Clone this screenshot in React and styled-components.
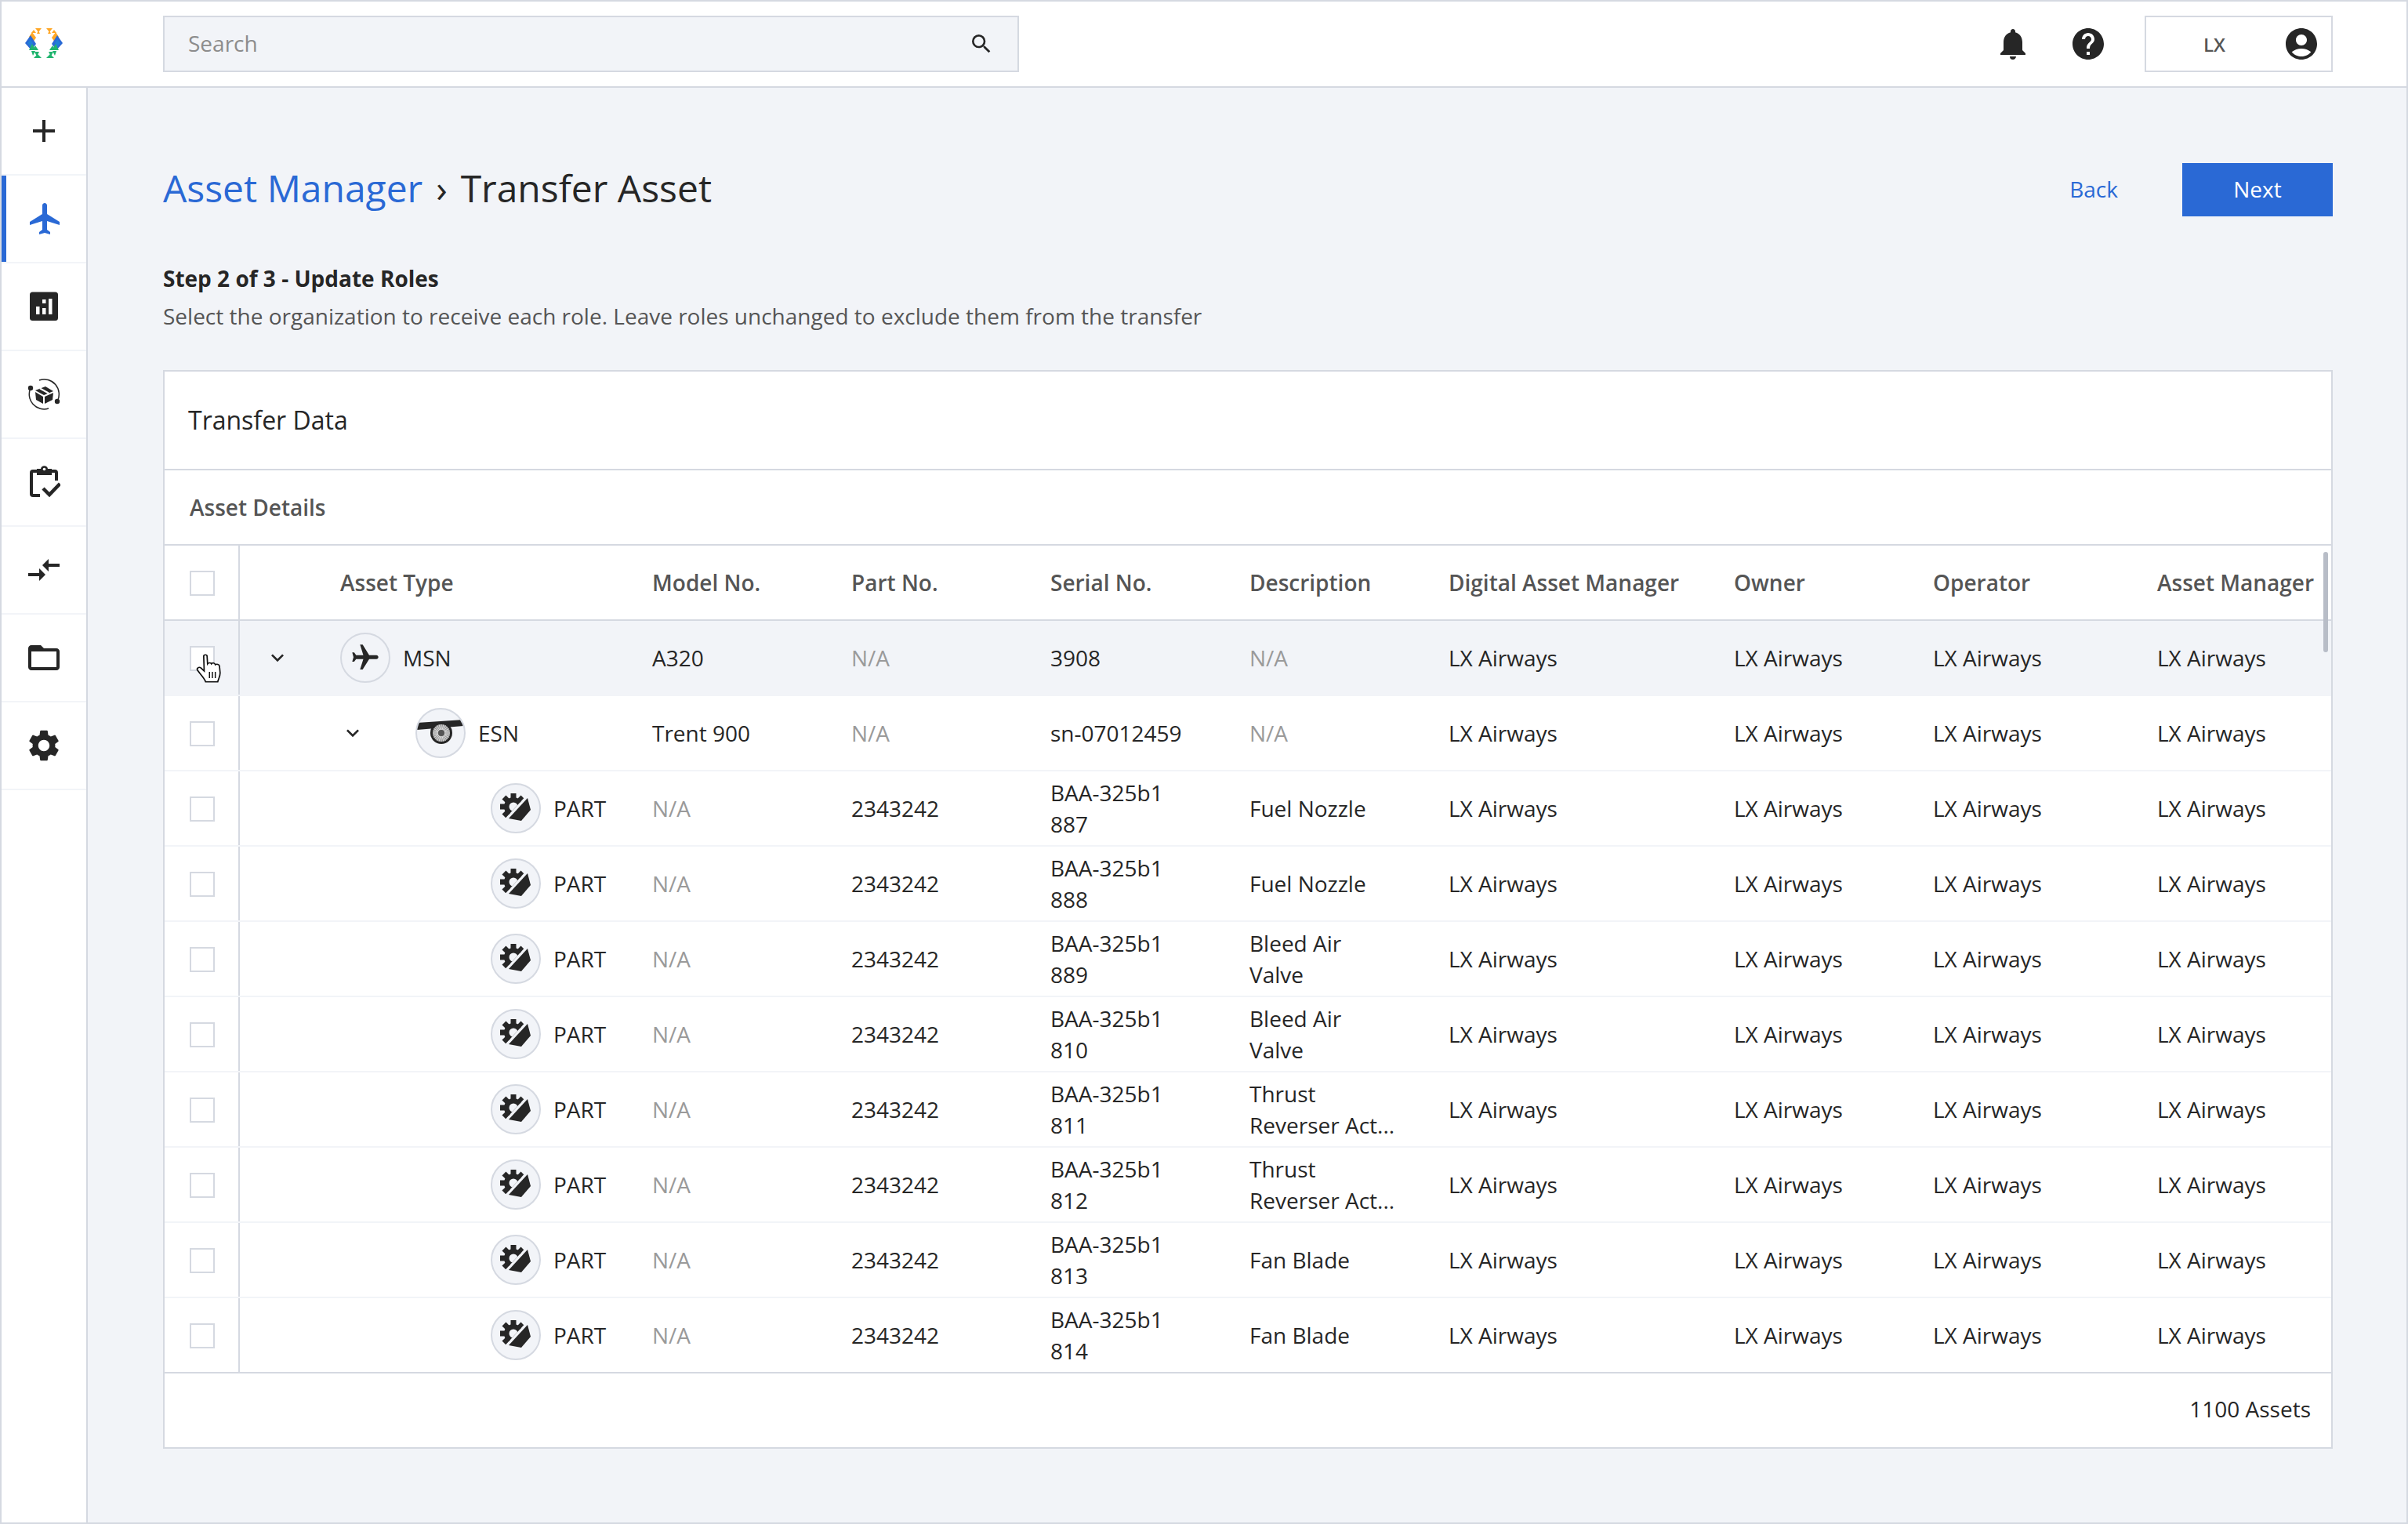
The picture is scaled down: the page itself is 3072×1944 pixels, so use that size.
import React from 'react'
import styled, { createGlobalStyle } from 'styled-components'
import {
  MdAdd,
  MdAccountCircle,
  MdCompareArrows,
  MdFlight,
  MdFolderOpen,
  MdHelp,
  MdKeyboardArrowDown,
  MdNotifications,
  MdSearch,
  MdSettings,
} from 'react-icons/md'

const line = '#d5d9e1'
const soft = '#f2f4f8'
const blue = '#2a69d5'
const ink = '#262626'
const columns = '96px 526px 254px 254px 254px 254px 364px 254px 286px 222px'

const GlobalStyle = createGlobalStyle`
  html, body { margin: 0; padding: 0; }
  body {
    background: ${soft};
    font-family: "Open Sans", "Noto Sans", sans-serif;
    color: ${ink};
  }
`

const Page = styled.div`
  box-sizing: border-box;
  width: 3072px;
  height: 1944px;
  border: 2px solid ${line};
  display: flex;
  flex-direction: column;
  overflow: hidden;
`

const TopBar = styled.header`
  box-sizing: border-box;
  height: 110px;
  flex: none;
  display: flex;
  align-items: center;
  background: #fff;
  border-bottom: 2px solid ${line};
  padding-right: 94px;
`

const LogoCell = styled.div`
  width: 108px;
  display: flex;
  justify-content: center;
  margin-right: 98px;
  margin-top: -2px;
`

const SearchBox = styled.div`
  box-sizing: border-box;
  width: 1092px;
  height: 72px;
  display: flex;
  align-items: center;
  justify-content: space-between;
  background: ${soft};
  border: 2px solid ${line};
  padding: 0 30px;
  color: #8c8c8c;
  font-size: 28px;
  svg { color: ${ink}; }
`

const SearchLabel = styled.span`
  margin-top: -2px;
`

const TopActions = styled.div`
  margin-left: auto;
  display: flex;
  align-items: center;
  gap: 48px;
  svg { display: block; color: ${ink}; }
`

const ProfileBox = styled.div`
  box-sizing: border-box;
  width: 240px;
  height: 72px;
  display: flex;
  align-items: center;
  border: 2px solid ${line};
  padding-right: 14px;
`

const ProfileName = styled.span`
  flex: 1;
  text-align: center;
  font-size: 24px;
  font-weight: 600;
  color: #555;
`

const Body = styled.div`
  flex: 1;
  display: flex;
  min-height: 0;
`

const SideBar = styled.nav`
  box-sizing: border-box;
  width: 110px;
  flex: none;
  background: #fff;
  border-right: 2px solid ${line};
`

const SideItem = styled.div`
  position: relative;
  box-sizing: border-box;
  height: 112px;
  display: flex;
  align-items: center;
  justify-content: center;
  border-bottom: 2px solid ${soft};
  padding-left: ${(p) => (p.$active ? '4px' : '0')};
  color: ${(p) => (p.$active ? blue : ink)};
  svg { display: block; }
  &::before {
    content: '';
    display: ${(p) => (p.$active ? 'block' : 'none')};
    position: absolute;
    left: 0;
    top: 0;
    bottom: 0;
    width: 6px;
    background: ${blue};
  }
`

const Main = styled.main`
  flex: 1;
  min-width: 0;
  padding: 96px 94px 0 96px;
`

const TitleRow = styled.div`
  height: 68px;
  display: flex;
  align-items: center;
  justify-content: space-between;
`

const Title = styled.h1`
  margin: 0;
  padding-bottom: 4px;
  font-size: 48px;
  font-weight: 400;
  line-height: 64px;
  color: ${ink};
`

const Crumb = styled.span`
  color: ${blue};
`

const Separator = styled.span`
  margin: 0 17px;
`

const Actions = styled.div`
  display: flex;
  align-items: center;
  gap: 82px;
  font-size: 28px;
`

const BackLink = styled.span`
  color: ${blue};
  padding-bottom: 2px;
`

const NextButton = styled.span`
  box-sizing: border-box;
  width: 192px;
  height: 68px;
  display: flex;
  align-items: center;
  justify-content: center;
  padding-bottom: 2px;
  background: ${blue};
  color: #fff;
`

const StepBlock = styled.div`
  margin: 55px 0 45px;
  font-size: 28px;
  line-height: 48px;
`

const StepName = styled.div`
  font-weight: 700;
  color: ${ink};
`

const StepHint = styled.div`
  color: #555;
`

const Card = styled.section`
  background: #fff;
  border: 2px solid ${line};
`

const CardHead = styled.div`
  box-sizing: border-box;
  height: 126px;
  display: flex;
  align-items: center;
  padding: 0 0 2px 30px;
  font-size: 32px;
  border-bottom: 2px solid ${line};
`

const SectionHead = styled.div`
  box-sizing: border-box;
  height: 96px;
  display: flex;
  align-items: center;
  padding-left: 32px;
  font-size: 28px;
  font-weight: 600;
  color: #555;
  border-bottom: 2px solid ${line};
`

const TableWrap = styled.div`
  position: relative;
`

const Row = styled.div`
  box-sizing: border-box;
  height: 96px;
  display: grid;
  grid-template-columns: ${columns};
  align-items: center;
  font-size: 28px;
  line-height: 40px;
  background: ${(p) => (p.$highlight ? soft : '#fff')};
  border-bottom: 2px solid ${(p) => (p.$head || p.$last ? line : soft)};
  color: ${(p) => (p.$head ? '#555' : ink)};
  font-weight: ${(p) => (p.$head ? 600 : 400)};
  white-space: nowrap;
`

const CheckCell = styled.div`
  position: relative;
  box-sizing: border-box;
  height: 94px;
  display: flex;
  align-items: center;
  justify-content: center;
  border-right: 2px solid ${line};
  padding: 2px 0 0 2px;
`

const CheckBox = styled.span`
  box-sizing: border-box;
  display: block;
  width: 32px;
  height: 32px;
  background: #fff;
  border: 2px solid ${line};
`

const HandCursor = styled.svg`
  position: absolute;
  left: 40px;
  top: 41px;
  width: 37px;
  height: 39px;
`

const TreeCell = styled.div`
  display: flex;
  align-items: center;
  padding-left: ${(p) => 32 + p.$level * 96}px;
`

const Chevron = styled.span`
  width: 32px;
  height: 32px;
  flex: none;
  margin-right: 64px;
  visibility: ${(p) => (p.$hidden ? 'hidden' : 'visible')};
  svg { display: block; }
`

const TypeBadge = styled.span`
  box-sizing: border-box;
  width: 64px;
  height: 64px;
  flex: none;
  margin-right: 16px;
  display: flex;
  align-items: center;
  justify-content: center;
  border-radius: 50%;
  border: 2px solid ${line};
  background: ${soft};
  overflow: hidden;
  svg { display: block; }
`

const Muted = styled.span`
  color: #9a9a9a;
`

const HeadLabel = styled.span`
  padding-left: 128px;
`

const TextCell = styled.div`
  white-space: normal;
  width: 190px;
`

const ScrollThumb = styled.span`
  position: absolute;
  top: 8px;
  right: 4px;
  width: 6px;
  height: 128px;
  border-radius: 3px;
  background: #b8bdc7;
`

const CardFoot = styled.div`
  box-sizing: border-box;
  height: 94px;
  display: flex;
  align-items: center;
  justify-content: flex-end;
  padding: 0 26px 4px 0;
  font-size: 28px;
`

const leftLogo = [
  ['#ffa726', '13,0 21,0 17,5'],
  ['#ffa726', '8,6 14,6 11,2'],
  ['#ffa726', '15,7 19,7 17,3'],
  ['#ffa726', '5,11 9,5 14,12 10,18'],
  ['#2a69d5', '0,19 7,9 14,20 8,28'],
  ['#1f7fd6', '3,19 7,14 10,19 7,24'],
  ['#1fb46e', '9,20 14,28 5,28'],
  ['#1fb46e', '13,22 17,28 10,28'],
  ['#1fb46e', '8,29 13,29 10,35'],
  ['#1fb46e', '12,30 18,30 15,36'],
  ['#1fb46e', '11,38 21,38 16,33'],
]

const Logo = () => (
  <svg width="48" height="38" viewBox="0 0 48 38">
    {leftLogo.map(([fill, points]) => (
      <polygon key={points} fill={fill} points={points} />
    ))}
    <g transform="matrix(-1 0 0 1 48 0)">
      {leftLogo.map(([fill, points]) => (
        <polygon key={points} fill={fill} points={points} />
      ))}
    </g>
  </svg>
)

const ReportIcon = () => (
  <svg width="48" height="48" viewBox="0 0 48 48">
    <rect x="6" y="5.5" width="36" height="36.5" rx="3.5" fill={ink} />
    <g fill="#fff">
      <rect x="14" y="24" width="4.5" height="10" />
      <rect x="22" y="15" width="4.5" height="5" />
      <rect x="22" y="26" width="4.5" height="8" />
      <rect x="30" y="14" width="4.5" height="20" />
    </g>
  </svg>
)

const PackageIcon = () => (
  <svg width="48" height="48" viewBox="0 0 48 48">
    <g fill="none" stroke={ink} strokeWidth="1.5">
      <path d="M7 16A19 19 0 0 0 30 42" />
      <path d="M41 33A19 19 0 0 0 18 6" />
    </g>
    <circle cx="7" cy="16" r="3.2" fill={ink} />
    <circle cx="41" cy="33" r="3.2" fill={ink} />
    <g fill={ink}>
      <polygon points="13,19 26,14 36,20 24,25" />
      <polygon points="13,21 23,27 23,36 14,31" />
      <polygon points="25,27 36,22 35,31 25,36" />
    </g>
    <path d="M19 16.5L30 22.5" stroke="#fff" strokeWidth="2" />
  </svg>
)

const ClipboardIcon = () => (
  <svg width="42" height="42" viewBox="-3 0 42 42">
    <g fill="none" stroke={ink} strokeWidth="4">
      <path d="M10 7H4a2 2 0 0 0-2 2V36a2 2 0 0 0 2 2H13" />
      <path d="M27 7H32a2 2 0 0 1 2 2V19" />
    </g>
    <path d="M9 4h5a4.6 4.6 0 0 1 9 0h5v8H9z" fill={ink} />
    <circle cx="18.5" cy="4.5" r="1.8" fill="#fff" />
    <path d="M17 29L25 37L38.5 23" fill="none" stroke={ink} strokeWidth="4.5" />
  </svg>
)

const PlaneBadge = () => <MdFlight size={40} color={ink} style={{ transform: 'rotate(90deg)' }} />

const spokes = Array.from({ length: 24 }, (_, i) => (i * 360) / 24)

const EngineBadge = () => (
  <svg width="60" height="60" viewBox="2 2 60 60">
    <polygon points="2,19 62,15 61,23 2,28" fill={ink} />
    <circle cx="33" cy="32" r="14" fill={ink} />
    <circle cx="33" cy="32" r="11" fill="#9a9a9a" />
    {spokes.map((a) => (
      <line
        key={a}
        x1="33"
        y1="28"
        x2="33"
        y2="21"
        stroke="#e8e8e8"
        strokeWidth="0.8"
        transform={`rotate(${a} 33 32)`}
      />
    ))}
    <circle cx="33" cy="32" r="4" fill="#555" />
  </svg>
)

const teeth = [0, 45, 90, 135, 180, 225, 270, 315]

const PartBadge = () => (
  <svg width="60" height="60" viewBox="2 2 60 60">
    <defs>
      <clipPath id="gear-half">
        <polygon points="0,0 60,0 1,64 0,64" />
      </clipPath>
    </defs>
    <g clipPath="url(#gear-half)">
      {teeth.map((a) => (
        <rect key={a} x="25.5" y="13" width="7" height="8" fill={ink} transform={`rotate(${a} 29 30)`} />
      ))}
      <circle cx="29" cy="30" r="12" fill={ink} />
      <circle cx="29" cy="30" r="5.5" fill={soft} />
    </g>
    <polygon points="23,45 47,19 51,34 39,48" fill={ink} />
  </svg>
)

const badges = { MSN: PlaneBadge, ESN: EngineBadge, PART: PartBadge }

const part = (serial, description) => ({
  level: 2,
  type: 'PART',
  model: 'N/A',
  partNo: '2343242',
  serial,
  description,
})

const rows = [
  { level: 0, type: 'MSN', model: 'A320', partNo: 'N/A', serial: '3908', description: 'N/A', highlight: true },
  { level: 1, type: 'ESN', model: 'Trent 900', partNo: 'N/A', serial: 'sn-07012459', description: 'N/A' },
  part('BAA-325b1 887', 'Fuel Nozzle'),
  part('BAA-325b1 888', 'Fuel Nozzle'),
  part('BAA-325b1 889', 'Bleed Air Valve'),
  part('BAA-325b1 810', 'Bleed Air Valve'),
  part('BAA-325b1 811', 'Thrust Reverser Act...'),
  part('BAA-325b1 812', 'Thrust Reverser Act...'),
  part('BAA-325b1 813', 'Fan Blade'),
  part('BAA-325b1 814', 'Fan Blade'),
]

const orNa = (value) => (value === 'N/A' ? <Muted>N/A</Muted> : value)

const AssetRow = ({ row, last }) => {
  const Badge = badges[row.type]
  return (
    <Row $highlight={row.highlight} $last={last}>
      <CheckCell>
        <CheckBox />
        {row.highlight && (
          <HandCursor viewBox="0 0 30 34" preserveAspectRatio="none">
            <path
              d="M8 3.5C8 1.5 11.5 1.5 11.5 3.5L12 12C13 10.5 15.5 10.5 16 12C17 10.5 19.5 11 20 13C21.5 11.8 24 12.5 24.3 14.5L25 22C25 26 23.5 28 22.5 32L10 32C9 28 4 23 1.5 19C.5 17 3 15 5 16.5L8.5 20Z"
              fill="#fff"
              stroke="#111"
              strokeWidth="1.4"
            />
            <path d="M14 21V28M17 21V28M20 21V28" stroke="#111" strokeWidth="1.2" />
          </HandCursor>
        )}
      </CheckCell>
      <TreeCell $level={row.level}>
        <Chevron $hidden={row.level === 2}>
          <MdKeyboardArrowDown size={32} color={ink} />
        </Chevron>
        <TypeBadge>
          <Badge />
        </TypeBadge>
        {row.type}
      </TreeCell>
      <div>{orNa(row.model)}</div>
      <div>{orNa(row.partNo)}</div>
      <TextCell>{row.serial}</TextCell>
      <TextCell>{orNa(row.description)}</TextCell>
      <div>LX Airways</div>
      <div>LX Airways</div>
      <div>LX Airways</div>
      <div>LX Airways</div>
    </Row>
  )
}

const App = () => (
  <Page>
    <GlobalStyle />
    <TopBar>
      <LogoCell>
        <Logo />
      </LogoCell>
      <SearchBox>
        <SearchLabel>Search</SearchLabel>
        <MdSearch size={32} />
      </SearchBox>
      <TopActions>
        <MdNotifications size={48} />
        <MdHelp size={48} />
        <ProfileBox>
          <ProfileName>LX</ProfileName>
          <MdAccountCircle size={48} />
        </ProfileBox>
      </TopActions>
    </TopBar>
    <Body>
      <SideBar>
        <SideItem>
          <MdAdd size={48} />
        </SideItem>
        <SideItem $active>
          <MdFlight size={48} />
        </SideItem>
        <SideItem>
          <ReportIcon />
        </SideItem>
        <SideItem>
          <PackageIcon />
        </SideItem>
        <SideItem>
          <ClipboardIcon />
        </SideItem>
        <SideItem>
          <MdCompareArrows size={48} />
        </SideItem>
        <SideItem>
          <MdFolderOpen size={48} />
        </SideItem>
        <SideItem>
          <MdSettings size={48} />
        </SideItem>
      </SideBar>
      <Main>
        <TitleRow>
          <Title>
            <Crumb>Asset Manager</Crumb>
            <Separator>›</Separator>
            Transfer Asset
          </Title>
          <Actions>
            <BackLink>Back</BackLink>
            <NextButton>Next</NextButton>
          </Actions>
        </TitleRow>
        <StepBlock>
          <StepName>Step 2 of 3 - Update Roles</StepName>
          <StepHint>Select the organization to receive each role. Leave roles unchanged to exclude them from the transfer</StepHint>
        </StepBlock>
        <Card>
          <CardHead>Transfer Data</CardHead>
          <SectionHead>Asset Details</SectionHead>
          <TableWrap>
            <Row $head>
              <CheckCell>
                <CheckBox />
              </CheckCell>
              <HeadLabel>Asset Type</HeadLabel>
              <div>Model No.</div>
              <div>Part No.</div>
              <div>Serial No.</div>
              <div>Description</div>
              <div>Digital Asset Manager</div>
              <div>Owner</div>
              <div>Operator</div>
              <div>Asset Manager</div>
            </Row>
            {rows.map((row, i) => (
              <AssetRow key={i} row={row} last={i === rows.length - 1} />
            ))}
            <ScrollThumb />
          </TableWrap>
          <CardFoot>1100 Assets</CardFoot>
        </Card>
      </Main>
    </Body>
  </Page>
)

export default App
